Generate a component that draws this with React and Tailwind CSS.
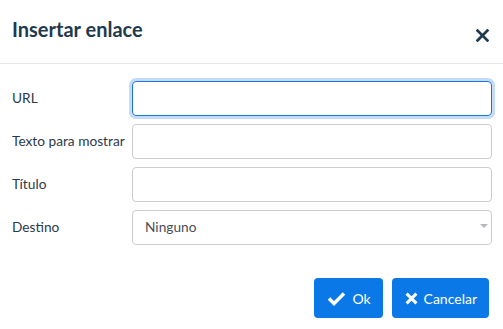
import React from 'react'

function Field({label, children}){
  return (
    <div className="flex items-center h-[35px]">
      <label className="w-[120px] shrink-0 text-[13.7px] text-[#2b3a4a]">{label}</label>
      <div className="flex-1">{children}</div>
    </div>
  )
}

export default function App(){
  return (
    <div className="w-[503px] h-[329px] bg-white font-['Lato','Open_Sans',sans-serif] text-[#222f3e]">
      <div className="flex items-start justify-between h-[64px] px-3 pt-[16px] border-b border-[#e3e6ea]">
        <h1 className="text-[20px] font-bold text-[#1f3a4d] leading-[26px]">Insertar enlace</h1>
        <button className="mt-[13px] mr-[2px] text-[#1f3a4d]">
          <svg width="13" height="13" viewBox="0 0 12 12"><path d="M1.5 1.5 10.5 10.5M10.5 1.5 1.5 10.5" stroke="currentColor" strokeWidth="2.6" strokeLinecap="square"/></svg>
        </button>
      </div>
      <div className="flex flex-col gap-2 pl-3 pr-[11px] pt-[17px]">
        <Field label="URL">
          <input className="w-full h-[35px] rounded-[4px] border border-[#1a73e8] outline-none ring-[3px] ring-[#c5dcf7] px-2" />
        </Field>
        <Field label="Texto para mostrar">
          <input className="w-full h-[35px] rounded-[4px] border border-[#cccccc] outline-none px-2" />
        </Field>
        <Field label="Título">
          <input className="w-full h-[35px] rounded-[4px] border border-[#cccccc] outline-none px-2" />
        </Field>
        <Field label="Destino">
          <div className="relative w-full h-[35px] rounded-[4px] border border-[#cccccc] flex items-center px-3 text-[13.7px] text-[#4a4f55]">
            Ninguno
            <svg className="absolute right-[3px] top-[13px]" width="8" height="5" viewBox="0 0 8 5"><path d="M0 0h8L4 4z" fill="#b3b8bf"/></svg>
          </div>
        </Field>
      </div>
      <div className="flex justify-end gap-[9px] pr-[14px] pt-[33px]">
        <button className="flex items-center gap-[6px] h-[40px] pl-[13px] pr-[12px] rounded-[4px] bg-[#0a78e6] text-white text-[14px]">
          <svg width="19" height="15" viewBox="0 0 19 15"><path d="M2 7.5 7 12.5 17 2.5" stroke="white" strokeWidth="3.4" fill="none"/></svg>
          Ok
        </button>
        <button className="flex items-center gap-[6px] h-[40px] pl-[13px] pr-[12px] rounded-[4px] bg-[#0a78e6] text-white text-[14px]">
          <svg width="13" height="13" viewBox="0 0 12 12"><path d="M1.5 1.5 10.5 10.5M10.5 1.5 1.5 10.5" stroke="white" strokeWidth="2.8"/></svg>
          Cancelar
        </button>
      </div>
    </div>
  )
}
